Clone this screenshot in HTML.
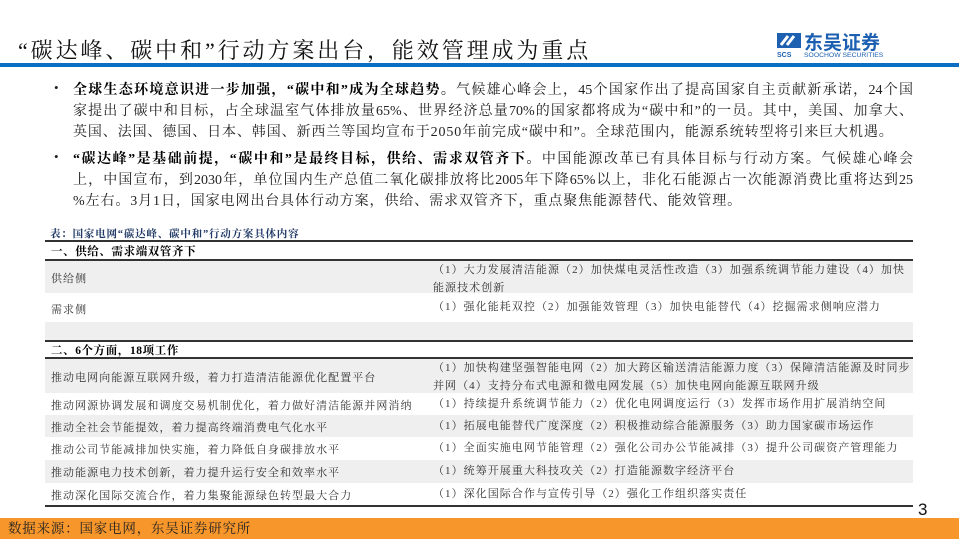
<!DOCTYPE html>
<html><head><meta charset="utf-8"><style>
*{margin:0;padding:0;box-sizing:border-box}
body{width:959px;height:539px;background:#fff;position:relative;overflow:hidden;font-family:"Liberation Serif","Noto Serif CJK SC",serif;color:#222}
.abs{position:absolute}
.title{left:18px;top:34px;font-size:22px;color:#111;letter-spacing:2.9px;white-space:nowrap}
.bar{left:0;top:63px;width:959px;height:4px;background:#0a6fc2}
.logo{left:776px;top:31px}
.p{left:73px;width:840px;font-size:14px;line-height:21px;color:#222}
.p div{white-space:nowrap;text-align:justify;text-align-last:justify}
.p div.l{text-align-last:left;letter-spacing:0.9px}
.dot{left:54px;font-size:13px}
b{font-weight:bold;color:#000}
.cap{left:50px;top:226px;font-size:10.5px;font-weight:bold;color:#1f3864;letter-spacing:0.8px}
.row{position:absolute;left:45px;width:868px;font-size:11px;letter-spacing:1.05px;color:#333}
.g{background:#efefef}
.c1{position:absolute;left:6px;white-space:nowrap}
.c2{position:absolute;left:388px;width:478px;line-height:18px}
.line{position:absolute;left:45px;width:868px;background:#333}
.h{font-weight:bold;color:#000;font-size:11.5px;letter-spacing:0.6px}
.src{left:0;top:518px;width:959px;height:21px;background:#f7962b;font-size:13.5px;letter-spacing:0.8px;padding-left:8px;line-height:21px;color:#222}
</style></head><body>
<div class="abs title">“碳达峰、碳中和”行动方案出台，能效管理成为重点</div>
<div class="abs bar"></div>
<div class="abs logo">
<svg width="140" height="28" viewBox="0 0 140 28">
<rect x="1" y="2" width="24" height="15" fill="#1d5fb0"/>
<path d="M5 14 L12 5 M11 14 L18 5" stroke="#fff" stroke-width="3"/>
<text x="1" y="26" font-family="Liberation Sans" font-size="7" font-weight="bold" fill="#1d5fb0">SCS</text>
<text x="28" y="18" font-family="Liberation Sans,Noto Sans CJK SC,sans-serif" font-size="19" font-weight="bold" fill="#1d5fb0">东吴证券</text>
<text x="28" y="26" font-family="Liberation Sans,sans-serif" font-size="6.8" fill="#1d5fb0">SOOCHOW SECURITIES</text>
</svg></div>
<div class="abs dot" style="top:80px">•</div>
<div class="abs p" style="top:80px">
<div><b>全球生态环境意识进一步加强，“碳中和”成为全球趋势。</b>气候雄心峰会上，45个国家作出了提高国家自主贡献新承诺，24个国</div>
<div>家提出了碳中和目标，占全球温室气体排放量65%、世界经济总量70%的国家都将成为“碳中和”的一员。其中，美国、加拿大、</div>
<div class="l">英国、法国、德国、日本、韩国、新西兰等国均宣布于2050年前完成“碳中和”。全球范围内，能源系统转型将引来巨大机遇。</div>
</div>
<div class="abs dot" style="top:149px">•</div>
<div class="abs p" style="top:149px">
<div><b>“碳达峰”是基础前提，“碳中和”是最终目标，供给、需求双管齐下。</b>中国能源改革已有具体目标与行动方案。气候雄心峰会</div>
<div>上，中国宣布，到2030年，单位国内生产总值二氧化碳排放将比2005年下降65%以上，非化石能源占一次能源消费比重将达到25</div>
<div class="l">%左右。3月1日，国家电网出台具体行动方案，供给、需求双管齐下，重点聚焦能源替代、能效管理。</div>
</div>
<div class="abs cap">表：国家电网“碳达峰、碳中和”行动方案具体内容</div>
<div class="line" style="top:240px;height:2px"></div>
<div class="row h" style="top:242px;height:17px"><span class="c1" style="top:1px">一、供给、需求端双管齐下</span></div>
<div class="line" style="top:259px;height:1.5px"></div>
<div class="row g" style="top:261px;height:32px"><span class="c1" style="top:9px">供给侧</span><span class="c2" style="top:0">（1）大力发展清洁能源（2）加快煤电灵活性改造（3）加强系统调节能力建设（4）加快能源技术创新</span></div>
<div class="row" style="top:293px;height:29px"><span class="c1" style="top:8px">需求侧</span><span class="c2" style="top:5px">（1）强化能耗双控（2）加强能效管理（3）加快电能替代（4）挖掘需求侧响应潜力</span></div>
<div class="row g" style="top:322px;height:18px"></div>
<div class="line" style="top:340px;height:2px"></div>
<div class="row h" style="top:342px;height:15px"><span class="c1" style="top:0">二、6个方面，18项工作</span></div>
<div class="line" style="top:357px;height:1.5px"></div>
<div class="row g" style="top:359px;height:34px"><span class="c1" style="top:10px">推动电网向能源互联网升级，着力打造清洁能源优化配置平台</span><span class="c2" style="top:0">（1）加快构建坚强智能电网（2）加大跨区输送清洁能源力度（3）保障清洁能源及时同步并网（4）支持分布式电源和微电网发展（5）加快电网向能源互联网升级</span></div>
<div class="row" style="top:393px;height:22px"><span class="c1" style="top:4px">推动网源协调发展和调度交易机制优化，着力做好清洁能源并网消纳</span><span class="c2" style="top:2px">（1）持续提升系统调节能力（2）优化电网调度运行（3）发挥市场作用扩展消纳空间</span></div>
<div class="row g" style="top:415px;height:22px"><span class="c1" style="top:4px">推动全社会节能提效，着力提高终端消费电气化水平</span><span class="c2" style="top:2px">（1）拓展电能替代广度深度（2）积极推动综合能源服务（3）助力国家碳市场运作</span></div>
<div class="row" style="top:437px;height:23px"><span class="c1" style="top:4px">推动公司节能减排加快实施，着力降低自身碳排放水平</span><span class="c2" style="top:2px">（1）全面实施电网节能管理（2）强化公司办公节能减排（3）提升公司碳资产管理能力</span></div>
<div class="row g" style="top:460px;height:23px"><span class="c1" style="top:4px">推动能源电力技术创新，着力提升运行安全和效率水平</span><span class="c2" style="top:2px">（1）统筹开展重大科技攻关（2）打造能源数字经济平台</span></div>
<div class="row" style="top:483px;height:22px"><span class="c1" style="top:4px">推动深化国际交流合作，着力集聚能源绿色转型最大合力</span><span class="c2" style="top:2px">（1）深化国际合作与宣传引导（2）强化工作组织落实责任</span></div>
<div class="line" style="top:505px;height:2px"></div>
<div class="abs" style="left:918px;top:500px;font-family:'Liberation Sans',sans-serif;font-size:17px;color:#111">3</div>
<div class="abs src">数据来源：国家电网，东吴证券研究所</div>
</body></html>
